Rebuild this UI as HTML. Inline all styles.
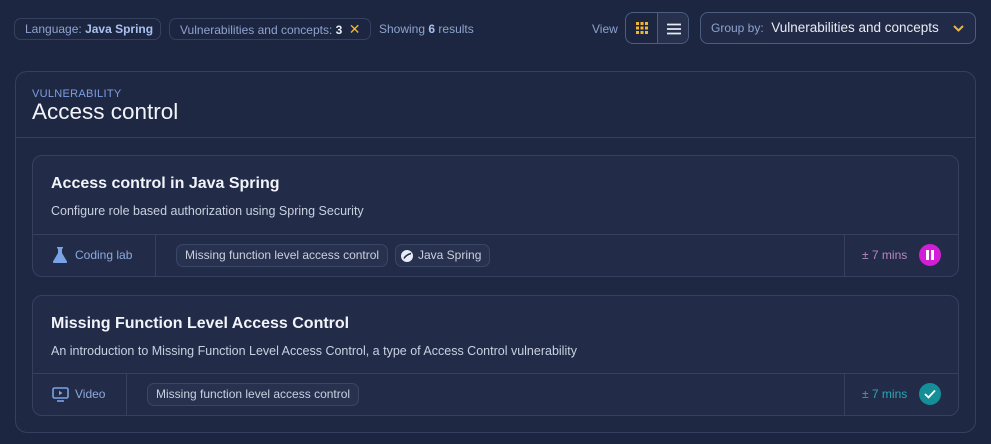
<!DOCTYPE html>
<html><head><style>
*{box-sizing:border-box;margin:0;padding:0}
body{width:991px;height:444px;background:#1d2640;font-family:"Liberation Sans",sans-serif;position:relative;overflow:hidden;color:#e8ecf5}
.abs{position:absolute}
.chip{position:absolute;top:18px;height:22px;border:1px solid #34425f;border-radius:7px;font-size:12px;color:#8ea3cf;line-height:20px;padding:0 10px;white-space:nowrap}
.chip b{color:#a9c0f0}
.outer{left:15px;top:71px;width:961px;height:362px;border:1px solid #33405f;border-radius:12px;background:#1f2843}
.card{position:absolute;left:32px;width:927px;border:1px solid #34415f;border-radius:10px;background:#222c48}
.card h2{position:absolute;left:18px;font-size:16px;font-weight:bold;color:#f2f4fa}
.card p{position:absolute;left:18px;font-size:12.5px;color:#c9d0e0}
.foot{position:absolute;left:0;right:0;bottom:0;height:42px;border-top:1px solid #34415f}
.tag{position:absolute;top:9px;height:23px;border:1px solid #38466a;border-radius:7px;background:#28324f;color:#c9d0e0;font-size:12px;line-height:21px;padding:0 8px;white-space:nowrap}
.vl{position:absolute;top:0;bottom:0;width:1px;background:#34415f}
</style></head><body>
<div class="chip" style="left:14px;width:147px">Language: <b>Java Spring</b></div>
<div class="chip" style="left:169px;width:202px">Vulnerabilities and concepts: <b style="color:#e6ecf8">3</b> <span style="color:#f2b632;font-size:14px;margin-left:3px">✕</span></div>
<div class="abs" style="left:379px;top:22px;font-size:12px;color:#8ea3cf">Showing <b style="color:#a9c0f0">6</b> results</div>
<div class="abs" style="left:592px;top:22px;font-size:12px;color:#8ea3cf">View</div>
<div class="abs" style="left:625px;top:12px;width:64px;height:32px;border:1px solid #4d5d82;border-radius:8px;overflow:hidden">
 <div class="abs" style="left:31px;top:0;width:1px;height:32px;background:#4d5d82"></div>
 <svg class="abs" style="left:10px;top:9px" width="12" height="12" fill="#f2b632"><rect x="0" y="0" width="3" height="3"/><rect x="4.5" y="0" width="3" height="3"/><rect x="9" y="0" width="3" height="3"/><rect x="0" y="4.5" width="3" height="3"/><rect x="4.5" y="4.5" width="3" height="3"/><rect x="9" y="4.5" width="3" height="3"/><rect x="0" y="9" width="3" height="3"/><rect x="4.5" y="9" width="3" height="3"/><rect x="9" y="9" width="3" height="3"/></svg>
 <div class="abs" style="left:32px;top:0;width:32px;height:32px;background:#27314d"></div>
 <svg class="abs" style="left:41px;top:10px" width="14" height="12" stroke="#e8ecf5" stroke-width="1.8"><path d="M0 1.5H14M0 6H14M0 10.5H14"/></svg>
</div>
<div class="abs" style="left:700px;top:12px;width:276px;height:32px;border:1px solid #4d5d82;border-radius:8px;background:#212a46;font-size:13.5px;line-height:30px;padding-left:10px;color:#e8ecf5;white-space:nowrap"><span style="color:#8ea3cf;font-size:12px">Group by:</span>&nbsp; Vulnerabilities and concepts
 <svg class="abs" style="left:252px;top:12px" width="11" height="7" fill="none" stroke="#f2b632" stroke-width="2"><path d="M1 1l4.5 4.5L10 1"/></svg></div>

<div class="abs outer">
 <div class="abs" style="left:16px;top:16px;font-size:11px;color:#7e9ee0;letter-spacing:.3px">VULNERABILITY</div>
 <div class="abs" style="left:16px;top:27px;font-size:22.5px;color:#f2f4fa">Access control</div>
 <div class="abs" style="left:0;right:0;top:65px;height:1px;background:#33405f"></div>
</div>

<div class="card" style="top:155px;height:122px">
 <h2 style="top:19px">Access control in Java Spring</h2>
 <p style="top:48px">Configure role based authorization using Spring Security</p>
 <div class="foot">
  <svg class="abs" style="left:20px;top:12px" width="14" height="16" fill="#7aa3e6"><path d="M4 0h6v1.5H9v4.5l5 8.5c.4.8-.1 1.5-1 1.5H1c-.9 0-1.4-.7-1-1.5l5-8.5V1.5H4z"/></svg>
  <div class="abs" style="left:42px;top:13px;font-size:12px;color:#8ea8dc">Coding lab</div>
  <div class="vl" style="left:122px"></div>
  <div class="tag" style="left:143px">Missing function level access control</div>
  <div class="tag" style="left:362px;padding-left:22px"><svg class="abs" style="left:5px;top:5px" width="12" height="12"><circle cx="6" cy="6" r="6" fill="#e8ecf5"/><path d="M3 8.5c2-3.5 5-4.5 7-5" stroke="#222c48" stroke-width="1.6" fill="none"/></svg>Java Spring</div>
  <div class="vl" style="left:811px"></div>
  <div class="abs" style="left:829px;top:13px;font-size:12px;color:#b886c4">± 7 mins</div>
  <div class="abs" style="left:886px;top:9px;width:22px;height:22px;border-radius:50%;background:#d21ed6"><div class="abs" style="left:7px;top:6px;width:2.5px;height:10px;background:#fff"></div><div class="abs" style="left:12px;top:6px;width:2.5px;height:10px;background:#fff"></div></div>
 </div>
</div>

<div class="card" style="top:295px;height:121px">
 <h2 style="top:19px">Missing Function Level Access Control</h2>
 <p style="top:48px">An introduction to Missing Function Level Access Control, a type of Access Control vulnerability</p>
 <div class="foot">
  <svg class="abs" style="left:19px;top:13px" width="17" height="15" fill="none" stroke="#7aa3e6" stroke-width="1.6"><rect x="1" y="1" width="15" height="10" rx="1.5"/><path d="M5 14h7"/><path d="M7 3.8v4.4l3.5-2.2z" fill="#7aa3e6" stroke="none"/></svg>
  <div class="abs" style="left:42px;top:13px;font-size:12px;color:#8ea8dc">Video</div>
  <div class="vl" style="left:93px"></div>
  <div class="tag" style="left:114px">Missing function level access control</div>
  <div class="vl" style="left:811px"></div>
  <div class="abs" style="left:829px;top:13px;font-size:12px;color:#2aa7b5">± 7 mins</div>
  <div class="abs" style="left:886px;top:9px;width:22px;height:22px;border-radius:50%;background:#148f98"><svg class="abs" style="left:5px;top:6px" width="12" height="10" fill="none" stroke="#fff" stroke-width="1.8"><path d="M1 5l3.5 3.5L11 1.5"/></svg></div>
 </div>
</div>
</body></html>
